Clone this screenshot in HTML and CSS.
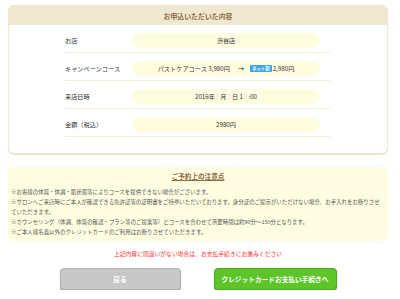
FILE: index.html
```html
<!DOCTYPE html>
<html lang="ja">
<head>
<meta charset="utf-8">
<title>お申込いただいた内容</title>
<link rel="stylesheet" href="styles.css">
</head>
<body>
<div class="page">
  <section class="card">
    <h2 class="card-head">お申込いただいた内容</h2>
    <div class="rows">
      <div class="row">
        <div class="label">お店</div>
        <div class="pill">渋谷店</div>
      </div>
      <div class="row">
        <div class="label">キャンペーンコース</div>
        <div class="pill">パストケアコース 3,980円<span class="arrow">→</span><span class="badge">ネット割</span>2,980円</div>
      </div>
      <div class="row">
        <div class="label">来店日時</div>
        <div class="pill">2016年<span class="mask">0</span>月<span class="mask">0</span>日 1<span class="mask">0</span>:00</div>
      </div>
      <div class="row">
        <div class="label">金額（税込）</div>
        <div class="pill">2980円</div>
      </div>
    </div>
  </section>

  <section class="notice">
    <h3 class="notice-title">ご予約上の注意点</h3>
    <p>※お客様の体質・体調・肌状態等によりコースを提供できない場合がございます。</p>
    <p>※サロンへご来店時にご本人が確認できる免許証等の証明書をご持参いただいております。身分証のご提示がいただけない場合、お手入れをお断りさせていただきます。</p>
    <p>※カウンセリング（体調、体質の確認・プラン等のご提案等）とコースを合わせて所要時間は約90分～150分となります。</p>
    <p>※ご本人様名義以外のクレジットカードのご利用はお断りさせていただきます。</p>
  </section>

  <p class="confirm">上記内容に間違いがない場合は、お支払手続きにお進みください</p>

  <div class="actions">
    <a class="btn btn-back" href="#">戻る</a>
    <a class="btn btn-pay" href="#">クレジットカードお支払い手続きへ</a>
  </div>
</div>
</body>
</html>
```

FILE: styles.css
```css
* { box-sizing: border-box; }
html, body { margin: 0; padding: 0; background: #ffffff; }
body {
  font-family: "Noto Sans CJK JP", "Noto Sans", sans-serif;
  color: #333333;
}
.page {
  width: 380px;
  margin: 0 0 0 8px;
  padding-top: 5px;
}

/* card */
.card {
  border: 1px solid #efe7cf;
  border-radius: 6px;
  overflow: hidden;
  background: #ffffff;
  box-shadow: 0 1px 1px #e9e0c6;
}
.card-head {
  margin: 0;
  height: 19px;
  background: #efe7cf;
  color: #8b6b40;
  font-size: 6.9px;
  font-weight: bold;
  display: flex;
  align-items: center;
  justify-content: center;
}
.rows {
  padding: 0 57px 16px 56px;
}
.row {
  display: flex;
  align-items: center;
  padding: 8px 0 4px;
  border-bottom: 1px solid #f2eddd;
}
.label {
  width: 67px;
  font-size: 6.2px;
  color: #333333;
}
.pill {
  width: 188px;
  height: 15px;
  border-radius: 7px;
  background: #fffde0;
  font-size: 6.2px;
  color: #333333;
  display: flex;
  align-items: center;
  justify-content: center;
  white-space: nowrap;
}
.arrow {
  margin: 0 6px 0 8px;
  font-weight: bold;
}
.badge {
  background: #3ea4e8;
  color: #ffffff;
  font-size: 4.4px;
  font-weight: bold;
  padding: 1px 2px;
  border-radius: 1px;
  margin-right: 1px;
  line-height: 5px;
}
.mask { color: #e4e4e4; margin: 0 1px; }

/* notice */
.notice {
  margin-top: 13px;
  background: #fffde1;
  border-radius: 5px;
  padding: 4px 3px 4px 3px;
}
.notice-title {
  margin: 0 0 6px;
  text-align: center;
  font-size: 6.6px;
  line-height: 10px;
  font-weight: bold;
  color: #8b6b40;
  text-decoration: underline;
}
.notice p {
  margin: 0;
  font-size: 5.45px;
  line-height: 10px;
  color: #555555;
}

.confirm {
  margin: 8px 0 0;
  text-align: center;
  font-size: 5.8px;
  line-height: 10px;
  color: #ff3333;
}

/* buttons */
.actions {
  margin-top: 9px;
  display: flex;
  justify-content: center;
  gap: 33px;
}
.btn {
  height: 22px;
  border-radius: 4px;
  display: flex;
  align-items: center;
  justify-content: center;
  color: #ffffff;
  font-weight: bold;
  font-size: 6.7px;
  text-decoration: none;
}
.btn-back {
  width: 121px;
  background: #c8c8c8;
  border: 1px solid #b2b2b2;
  box-shadow: 0 1px 1px #9c9c9c;
}
.btn-pay {
  width: 123px;
  background: #5dc52a;
  border: 1px solid #4ba71f;
  box-shadow: 0 1px 1px #7a9a6a;
}
```
